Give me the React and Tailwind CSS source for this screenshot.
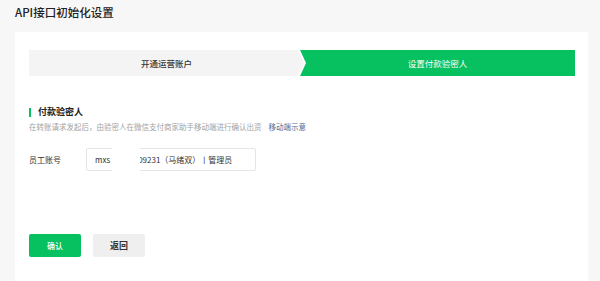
export default function App() {
  const font = { fontFamily: '"Noto Sans CJK SC", "Liberation Sans", sans-serif' }

  return (
    <div className="w-[600px] h-[281px] overflow-hidden bg-[#f7f7f7] text-[#333]" style={font}>
      <div className="h-[26px] flex items-center pl-[15px] text-[11.5px] font-medium text-[#222]">API接口初始化设置</div>

      <div className="mt-[6px] ml-[15px] mr-[12px] h-[260px] bg-white pt-[18px] pl-[14px] pr-[13px]">
        {/* steps */}
        <div className="flex h-[26px]">
          <div className="flex-1 flex items-center justify-center bg-[#f4f4f4] text-[8.5px] font-medium text-[#333] [clip-path:polygon(0_0,calc(100%-6px)_0,100%_50%,calc(100%-6px)_100%,0_100%)]">
            开通运营账户
          </div>
          <div className="flex-1 -ml-[4px] flex items-center justify-center bg-[#07c160] text-[8.5px] text-white [clip-path:polygon(0_0,100%_0,100%_100%,0_100%,6px_50%)]">
            设置付款验密人
          </div>
        </div>

        {/* section */}
        <div className="mt-[29px] h-[14px] flex items-center gap-[7px]">
          <div className="w-[2px] h-[9px] bg-[#07c160]" />
          <span className="text-[9px] font-bold text-[#222]">付款验密人</span>
        </div>
        <div className="mt-[2px] h-[12px] flex items-center text-[7.5px] text-[#a3a3a3]">
          <span>在转账请求发起后，由验密人在微信支付商家助手移动端进行确认出资</span>
          <span className="ml-[7px] text-[#576b95]">移动端示意</span>
        </div>

        {/* field */}
        <div className="mt-[15px] flex items-center">
          <span className="w-[57px] text-[8px] text-[#333]">员工账号</span>
          <div className="relative w-[170px] h-[23px] border border-[#e5e5e5] rounded-[2px] flex items-center pl-[8px] text-[8px] text-[#333]">
            <span>mxs</span>
            <span className="ml-[28px]">09231（马绪双）丨管理员</span>
            <div className="absolute left-[25px] top-[-2px] w-[28px] h-[27px] bg-white" />
          </div>
        </div>

        {/* buttons */}
        <div className="mt-[63px] flex gap-[12px]">
          <button className="w-[52px] h-[23px] rounded-[2px] bg-[#07c160] text-white text-[8px] font-medium">确认</button>
          <button className="w-[52px] h-[23px] rounded-[2px] bg-[#efefef] text-[#333] text-[9px] font-bold">返回</button>
        </div>
      </div>
    </div>
  )
}
